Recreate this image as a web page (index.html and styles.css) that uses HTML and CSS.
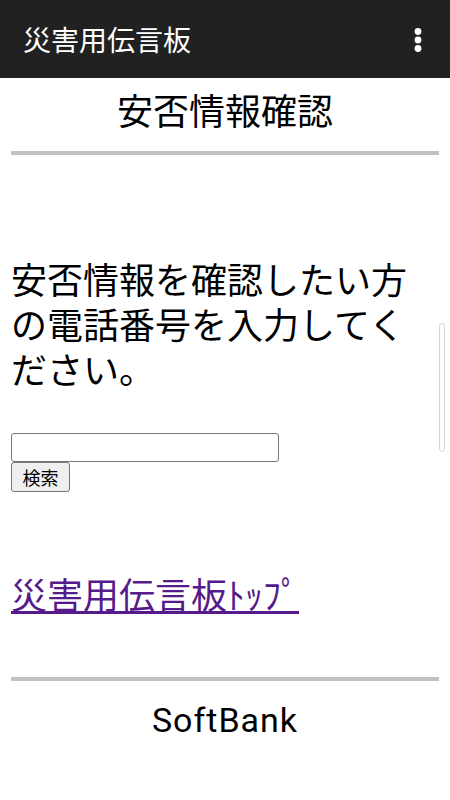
FILE: index.html
```html
<!DOCTYPE html>
<html lang="ja">
<head>
<meta charset="utf-8">
<title>災害用伝言板</title>
<link rel="stylesheet" href="styles.css">
</head>
<body>
<header class="appbar">
  <span class="appbar-title">災害用伝言板</span>
  <svg class="menu-icon" width="10" height="26" viewBox="0 0 10 26" aria-hidden="true">
    <circle cx="5" cy="4.5" r="3.4" fill="#fff"/>
    <circle cx="5" cy="13" r="3.4" fill="#fff"/>
    <circle cx="5" cy="21.5" r="3.4" fill="#fff"/>
  </svg>
</header>
<main class="content">
  <h1 class="page-title">安否情報確認</h1>
  <div class="rule rule-top"></div>
  <p class="lead">安否情報を確認したい方の電話番号を入力してください。</p>
  <form class="search">
    <input class="search-input" type="text">
    <button class="search-button" type="button">検索</button>
  </form>
  <a class="top-link" href="#">災害用伝言板ﾄｯﾌﾟ</a>
  <div class="rule rule-bottom"></div>
  <div class="brand">SoftBank</div>
</main>
<div class="scrollbar"></div>
</body>
</html>
```
FILE: styles.css
```css
html, body {
  margin: 0;
  padding: 0;
  background: #ffffff;
}
body {
  width: 450px;
  height: 800px;
  overflow: hidden;
  font-family: "Noto Sans CJK JP", "Noto Sans", sans-serif;
  color: #000;
  position: relative;
}
.appbar {
  height: 78px;
  background: #212121;
  display: flex;
  align-items: center;
  justify-content: space-between;
  padding: 0 27px 0 23px;
  box-sizing: border-box;
}
.appbar-title {
  color: #fff;
  font-size: 28px;
  line-height: 40px;
  letter-spacing: 0;
}
.menu-icon {
  display: block;
  margin-top: 1px;
}
.content {
  padding: 0 11px;
}
.page-title {
  margin: 0;
  padding-top: 5px;
  font-size: 36px;
  font-weight: normal;
  line-height: 52px;
  text-align: center;
}
.rule {
  height: 4px;
  background: #c2c2c2;
}
.rule-top {
  margin-top: 16px;
}
.lead {
  margin: 101px 0 0;
  font-size: 36px;
  line-height: 45px;
}
.search {
  margin-top: 42px;
  display: flex;
  flex-direction: column;
  align-items: flex-start;
}
.search-input {
  width: 268px;
  height: 29px;
  box-sizing: border-box;
  margin: 0;
  border: 1px solid #767676;
  border-radius: 3px;
  background: #fff;
}
.search-button {
  height: 30px;
  width: 59px;
  box-sizing: border-box;
  margin: 0;
  padding: 0;
  font-family: "Noto Sans CJK JP", sans-serif;
  font-size: 18px;
  line-height: 26px;
  color: #000;
  background: #efefef;
  border: 1px solid #767676;
  border-radius: 3px;
}
.top-link {
  display: block;
  width: max-content;
  margin-top: 75px;
  font-size: 36px;
  line-height: 52px;
  color: #551a8b;
  text-decoration: underline;
}
.rule-bottom {
  margin-top: 58px;
}
.brand {
  margin-top: 19px;
  font-family: Roboto, "Noto Sans", sans-serif;
  font-size: 34px;
  letter-spacing: 1px;
  line-height: 40px;
  text-align: center;
}
.scrollbar {
  position: absolute;
  left: 439px;
  top: 323px;
  width: 6px;
  height: 129px;
  box-sizing: border-box;
  border: 1px solid #d8d8d8;
  border-radius: 3px;
  background: #fff;
}
```
